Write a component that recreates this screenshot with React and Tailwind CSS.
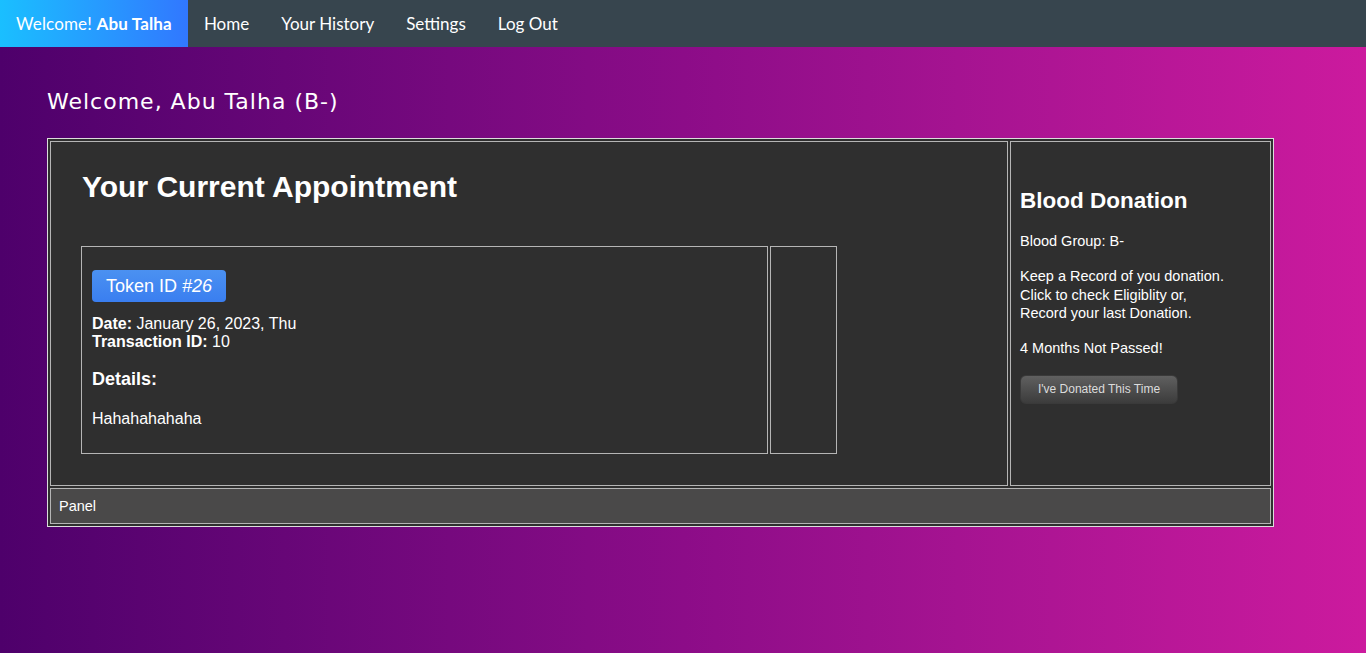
import React from 'react';

const navLinks = ['Home', 'Your History', 'Settings', 'Log Out'];

const NavBar = () => (
  <nav className="flex h-[47px] bg-[#37454e] font-['Lato',sans-serif] text-[17px] text-white">
    <div className="flex items-center px-4 bg-gradient-to-r from-[#1abfff] to-[#3177ff] tracking-[0.15px]">
      Welcome!&nbsp;<b>Abu Talha</b>
    </div>
    {navLinks.map((link) => (
      <a key={link} href="#" className="flex items-center px-4">
        {link}
      </a>
    ))}
  </nav>
);

const Appointment = () => (
  <div className="flex-1 border border-[#b5b5b5] bg-[#2f2f2f] pl-[30px] pt-[26px]">
    <h1 className="pl-[1px] text-[30px] font-bold leading-[37px]">Your Current Appointment</h1>

    <div className="mt-[41px] flex gap-[2px] w-[756px] h-[208px]">
      <div className="flex-1 border border-[#b5b5b5] px-[10px] pt-[23px]">
        <span className="inline-block rounded-[4px] bg-gradient-to-b from-[#4b91f1] to-[#3a7ef0] px-[14px] py-[4px] text-[18px] leading-[24px]">
          Token ID <i>#26</i>
        </span>
        <p className="mt-[13px] text-[16px] leading-[18px]">
          <b>Date:</b> January 26, 2023, Thu
          <br />
          <b>Transaction ID:</b> 10
        </p>
        <h3 className="mt-[17px] text-[18px] font-bold leading-[22px]">Details:</h3>
        <p className="mt-[20px] text-[16px] leading-[18px]">Hahahahahaha</p>
      </div>
      <div className="w-[67px] border border-[#b5b5b5]" />
    </div>
  </div>
);

const BloodDonation = () => (
  <div className="w-[261px] border border-[#b5b5b5] bg-[#2f2f2f] pl-[9px] pt-[46px] text-[14.5px] leading-[18.5px]">
    <h3 className="text-[22.5px] font-bold leading-[26px]">Blood Donation</h3>
    <p className="mt-[18px]">Blood Group: B-</p>
    <p className="mt-[16.5px]">
      Keep a Record of you donation.
      <br />
      Click to check Eligiblity or,
      <br />
      Record your last Donation.
    </p>
    <p className="mt-[16.5px]">4 Months Not Passed!</p>
    <button className="mt-[17px] h-[29px] w-[158px] rounded-[6px] border border-[#3a3a3a] bg-gradient-to-b from-[#606060] to-[#3c3c3c] text-[12px] text-[#dcdcdc]">
      I've Donated This Time
    </button>
  </div>
);

const App = () => {
  return (
    <div className="min-h-screen bg-gradient-to-r from-[#4e006b] via-[#8c0c88] to-[#cc1a9e] font-['Liberation_Sans',Arial,sans-serif] text-white">
      <NavBar />

      <main className="px-[47px] pt-[41px]">
        <h2 className="font-['DejaVu_Sans',sans-serif] text-[22px] leading-[28px] tracking-[1px]">
          Welcome, Abu Talha (B-)
        </h2>

        <div className="mt-[22px] flex w-[1227px] flex-col gap-[2px] border border-[#dcdcdc] bg-[#2f2f2f] p-[2px]">
          <div className="flex h-[345px] gap-[2px]">
            <Appointment />
            <BloodDonation />
          </div>
          <div className="flex h-[36px] items-center border border-[#b5b5b5] bg-[#4a4949] pl-[8px] pt-[1px] text-[14.5px]">
            Panel
          </div>
        </div>
      </main>
    </div>
  );
};

export default App;
